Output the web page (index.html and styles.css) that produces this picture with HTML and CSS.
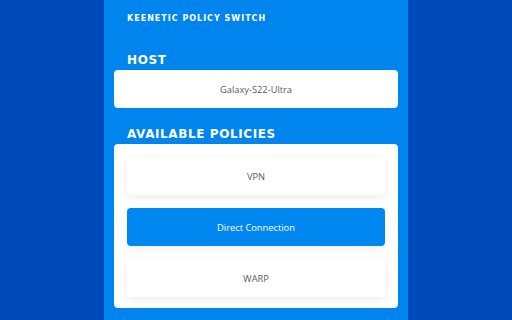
FILE: index.html
```html
<!DOCTYPE html>
<html lang="en">
<head>
  <meta charset="UTF-8" />
  <title>Keenetic Policy Switch</title>
  <link rel="stylesheet" href="styles.css">
</head>
<body>
  <div class="panel">
    <h1 class="title">Keenetic Policy Switch</h1>

    <section class="section host-section">
      <h2 class="section-label">Host</h2>
      <div class="card host-card">Galaxy-S22-Ultra</div>
    </section>

    <section class="section">
      <h2 class="section-label">Available Policies</h2>
      <div class="card policy-list">
        <div class="policy">VPN</div>
        <div class="policy active">Direct Connection</div>
        <div class="policy">WARP</div>
      </div>
    </section>
  </div>
</body>
</html>
```

FILE: styles.css
```css
* {
  margin: 0;
  padding: 0;
  box-sizing: border-box;
}

body {
  background-color: #0049b8;
  font-family: 'Open Sans', sans-serif;
  display: flex;
  justify-content: center;
  align-items: flex-start;
  min-height: 100vh;
  overflow: hidden;
}

.panel {
  width: 304px;
  min-height: 100vh;
  background: #0084ee;
  padding: 14px 10px 20px;
}

.title,
.section-label {
  font-family: 'DejaVu Sans', sans-serif;
  font-weight: bold;
  text-transform: uppercase;
  color: #fff;
  padding-left: 13px;
}

.title {
  font-size: 8px;
  letter-spacing: 1px;
  line-height: 10px;
}

.section {
  margin-top: 19px;
}

.host-section {
  margin-top: 29px;
}

.section-label {
  font-size: 12px;
  letter-spacing: 0.6px;
  line-height: 14px;
  margin-bottom: 3px;
}

.card {
  background: #fff;
  border-radius: 4px;
}

.host-card {
  height: 38px;
  display: flex;
  align-items: center;
  justify-content: center;
  font-size: 9.3px;
  color: #5a5a5a;
}

.policy-list {
  padding: 13px 13px 11px;
  display: flex;
  flex-direction: column;
  gap: 13px;
}

.policy {
  height: 38px;
  display: flex;
  align-items: center;
  justify-content: center;
  font-size: 9.3px;
  color: #5a5a5a;
  background: #fff;
  border-radius: 4px;
  box-shadow: 0 2px 8px rgba(0, 0, 0, 0.08);
}

.policy.active {
  background: #0088f0;
  color: #fff;
}
```
